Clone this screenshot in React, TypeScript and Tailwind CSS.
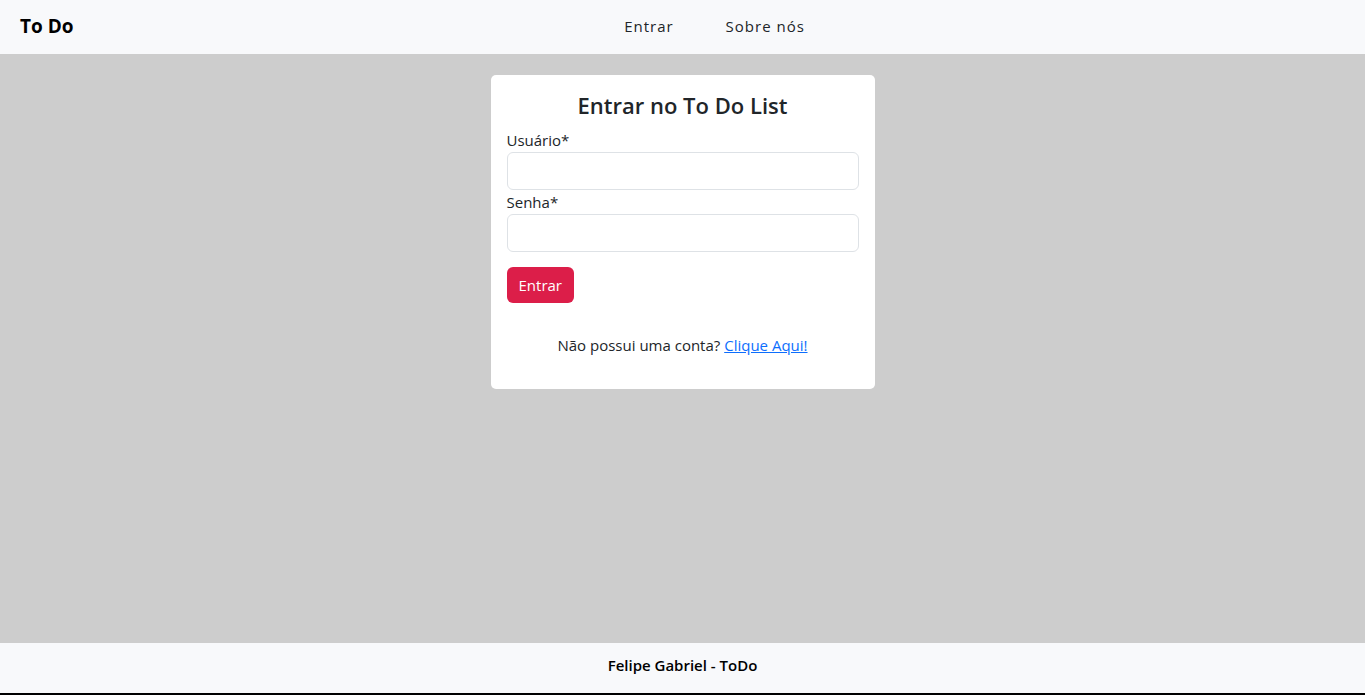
import type { InputHTMLAttributes } from 'react';

const navLinks = [
  { label: 'Entrar', href: '#entrar' },
  { label: 'Sobre nós', href: '#sobre' },
];

type FieldProps = InputHTMLAttributes<HTMLInputElement> & { id: string; label: string };

function Field({ id, label, ...rest }: FieldProps) {
  return (
    <div>
      <label htmlFor={id} className="block leading-6">
        {label}
      </label>
      <input
        id={id}
        name={id}
        className="block h-[38px] w-full rounded-md border border-[#dee2e6] bg-white px-3 focus:border-[#86b7fe] focus:outline-none"
        {...rest}
      />
    </div>
  );
}

export default function App() {
  return (
    <div className="flex min-h-screen flex-col bg-[#cdcdcd] font-['Segoe_UI','Open_Sans',sans-serif] text-[15px] text-[#212529]">
      <header className="grid h-[54px] grid-cols-[1fr_auto_1fr] items-center bg-[#f8f9fb] px-5 pb-0.5">
        <a href="#inicio" className="justify-self-start text-[19px] font-bold text-black">
          To Do
        </a>
        <nav className="flex gap-[52px] pl-16 tracking-[1px]">
          {navLinks.map((link) => (
            <a key={link.href} href={link.href}>
              {link.label}
            </a>
          ))}
        </nav>
      </header>

      <main className="flex flex-1 flex-col items-center px-4 py-[21px]">
        <section className="w-full max-w-96 rounded-[5px] bg-white p-4 pb-8">
          <h1 className="mb-2 text-center text-[22px] leading-[29px] font-semibold">Entrar no To Do List</h1>
          <form onSubmit={(event) => event.preventDefault()}>
            <Field id="usuario" label="Usuário*" type="text" autoComplete="username" />
            <Field id="senha" label="Senha*" type="password" autoComplete="current-password" />
            <button
              type="submit"
              className="mt-[15px] h-9 rounded-md bg-[#dc1e49] px-3 text-white hover:bg-[#bd183e]"
            >
              Entrar
            </button>
          </form>
          <p className="mt-[30px] text-center leading-6">
            Não possui uma conta?{' '}
            <a href="#cadastro" className="text-[#0d6efd] underline">
              Clique Aqui!
            </a>
          </p>
        </section>
      </main>

      <footer className="flex h-[52px] items-start justify-center border-b-2 border-black bg-[#f8f9fb] pt-[10px] leading-6 font-semibold text-black">
        Felipe Gabriel - ToDo
      </footer>
    </div>
  );
}
